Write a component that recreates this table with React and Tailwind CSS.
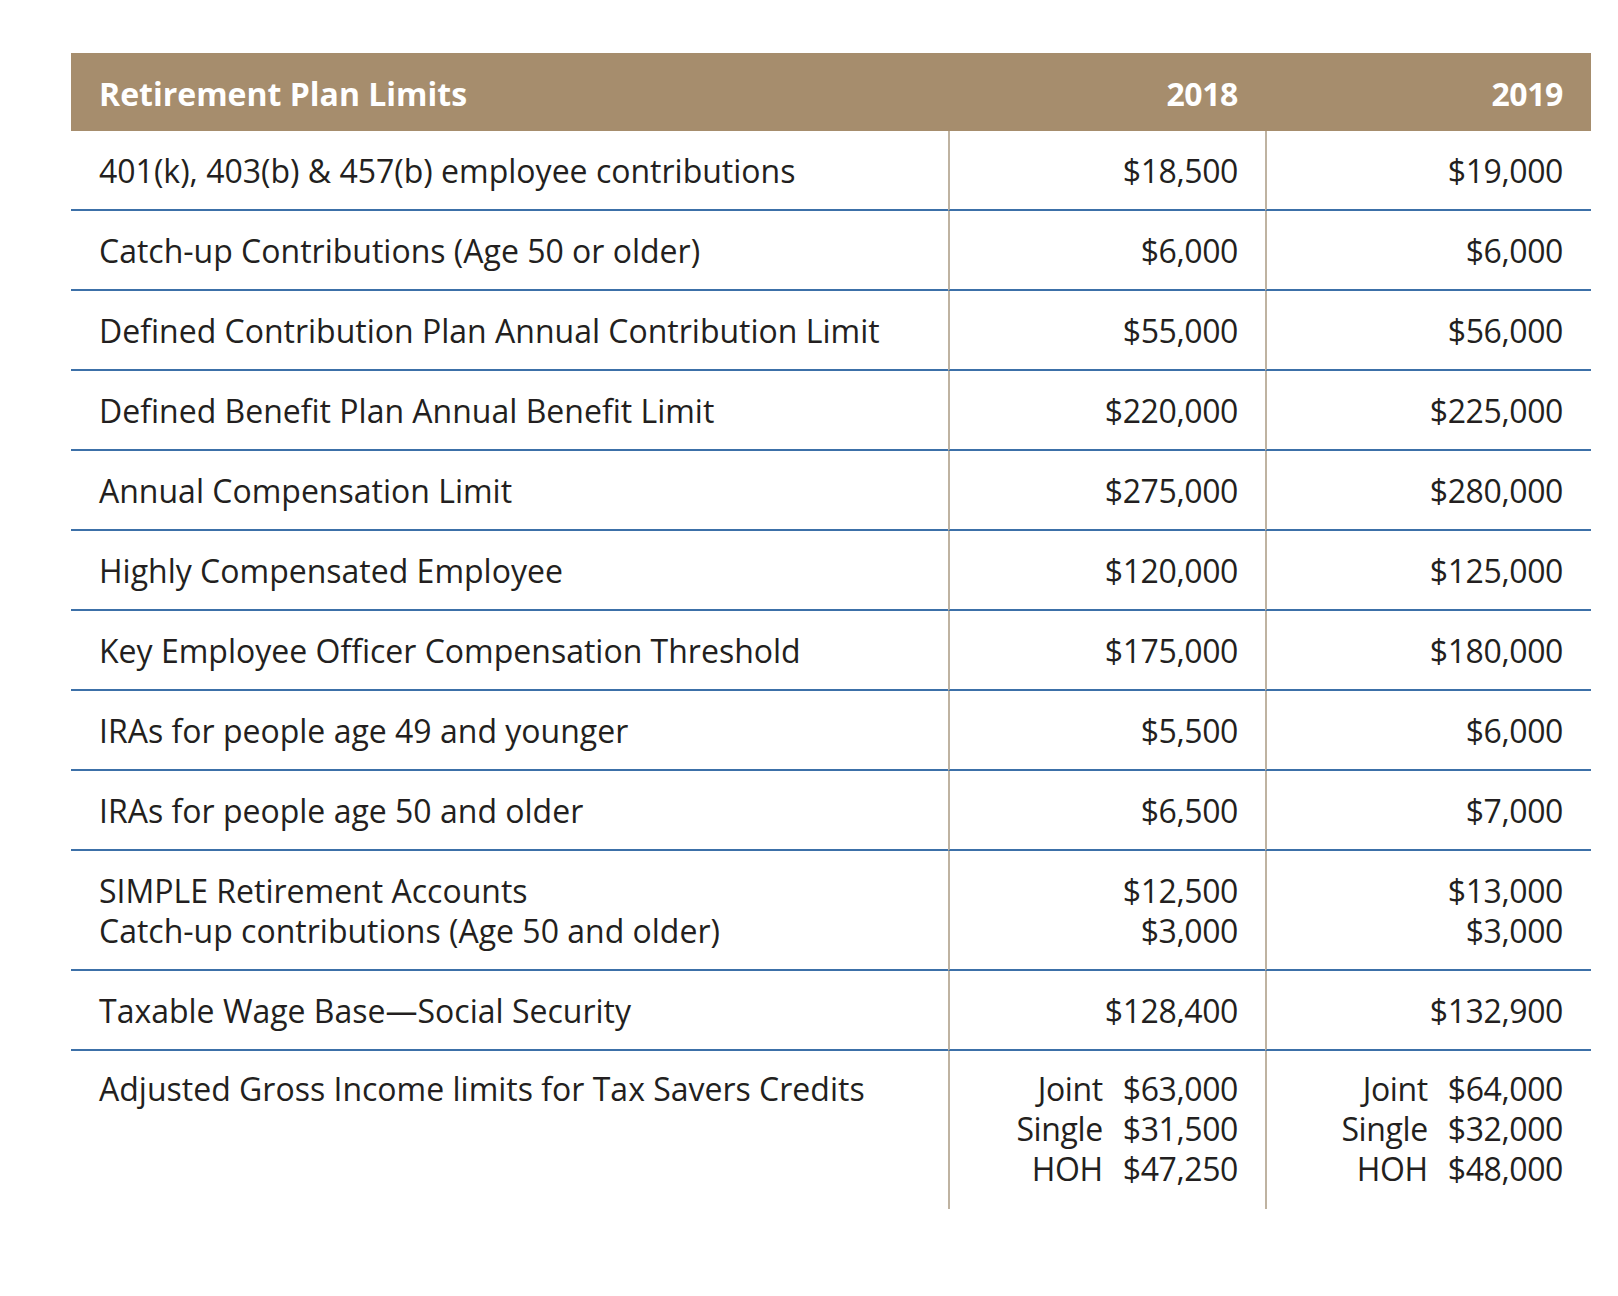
import React from 'react';

const rows = [
  { label: ['401(k), 403(b) & 457(b) employee contributions'], y2018: ['$18,500'], y2019: ['$19,000'] },
  { label: ['Catch-up Contributions (Age 50 or older)'], y2018: ['$6,000'], y2019: ['$6,000'] },
  { label: ['Defined Contribution Plan Annual Contribution Limit'], y2018: ['$55,000'], y2019: ['$56,000'] },
  { label: ['Defined Benefit Plan Annual Benefit Limit'], y2018: ['$220,000'], y2019: ['$225,000'] },
  { label: ['Annual Compensation Limit'], y2018: ['$275,000'], y2019: ['$280,000'] },
  { label: ['Highly Compensated Employee'], y2018: ['$120,000'], y2019: ['$125,000'] },
  { label: ['Key Employee Officer Compensation Threshold'], y2018: ['$175,000'], y2019: ['$180,000'] },
  { label: ['IRAs for people age 49 and younger'], y2018: ['$5,500'], y2019: ['$6,000'] },
  { label: ['IRAs for people age 50 and older'], y2018: ['$6,500'], y2019: ['$7,000'] },
  {
    label: ['SIMPLE Retirement Accounts', 'Catch-up contributions (Age 50 and older)'],
    y2018: ['$12,500', '$3,000'],
    y2019: ['$13,000', '$3,000']
  },
  { label: ['Taxable Wage Base\u2014Social Security'], y2018: ['$128,400'], y2019: ['$132,900'] }
];

const agi = {
  y2018: [['Joint', '$63,000'], ['Single', '$31,500'], ['HOH', '$47,250']],
  y2019: [['Joint', '$64,000'], ['Single', '$32,000'], ['HOH', '$48,000']]
};

function FilingTable({ items }) {
  return (
    <div className="grid grid-cols-[auto_auto] justify-end gap-x-[20px] text-right tracking-[-0.4px]">
      {items.map(([kind, amount]) => (
        <React.Fragment key={kind}>
          <span>{kind}</span>
          <span>{amount}</span>
        </React.Fragment>
      ))}
    </div>
  );
}

export default function App() {
  return (
    <div className="min-h-screen bg-white pt-[53px] pl-[71px] font-['Open_Sans',sans-serif] text-[#231f20]">
      <div className="grid w-[1520px] grid-cols-[877px_317px_326px] text-[32px] leading-[40px]">
        {/* header */}
        <div className="flex h-[78px] items-center bg-[#a68d6d] pt-[3px] pl-[28px] font-bold text-white">
          Retirement Plan Limits
        </div>
        <div className="flex h-[78px] items-center justify-end bg-[#a68d6d] pt-[3px] pr-[27px] font-bold tracking-[-0.4px] text-white">
          2018
        </div>
        <div className="flex h-[78px] items-center justify-end bg-[#a68d6d] pt-[3px] pr-[28px] font-bold tracking-[-0.4px] text-white">
          2019
        </div>

        {rows.map((row, i) => (
          <React.Fragment key={i}>
            <div className="border-b-2 border-[#3c70a8] pt-[20px] pb-[18px] pl-[28px]">
              {row.label.map((line) => (
                <div key={line}>{line}</div>
              ))}
            </div>
            <div className="border-b-2 border-l-2 border-b-[#3c70a8] border-l-[#bfb3a1] pt-[20px] pb-[18px] pr-[27px] text-right tracking-[-0.4px]">
              {row.y2018.map((v, j) => (
                <div key={j}>{v}</div>
              ))}
            </div>
            <div className="border-b-2 border-l-2 border-b-[#3c70a8] border-l-[#bfb3a1] pt-[20px] pb-[18px] pr-[28px] text-right tracking-[-0.4px]">
              {row.y2019.map((v, j) => (
                <div key={j}>{v}</div>
              ))}
            </div>
          </React.Fragment>
        ))}

        {/* last row */}
        <div className="pt-[18px] pl-[28px]">Adjusted Gross Income limits for Tax Savers Credits</div>
        <div className="border-l-2 border-[#bfb3a1] pt-[18px] pb-[20px] pr-[27px]">
          <FilingTable items={agi.y2018} />
        </div>
        <div className="border-l-2 border-[#bfb3a1] pt-[18px] pb-[20px] pr-[28px]">
          <FilingTable items={agi.y2019} />
        </div>
      </div>
    </div>
  );
}
